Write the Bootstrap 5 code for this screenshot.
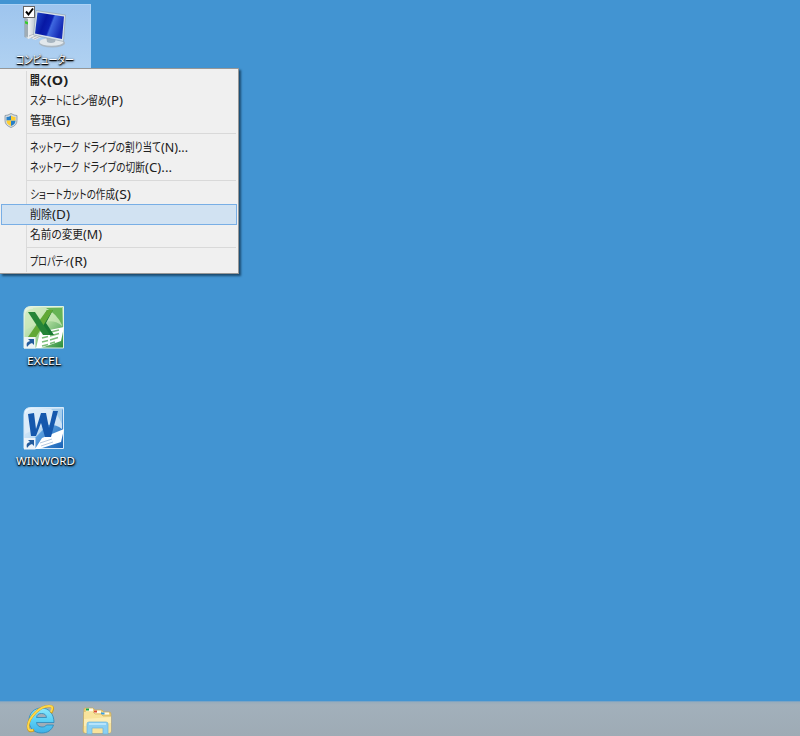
<!DOCTYPE html>
<html lang="ja">
<head>
<meta charset="utf-8">
<meta name="viewport" content="width=device-width, initial-scale=1">
<title>デスクトップ</title>
<link href="https://cdn.jsdelivr.net/npm/bootstrap@5.3.0/dist/css/bootstrap.min.css" rel="stylesheet">
<style>
body{background:#4294d2;font-family:"Noto Sans","Noto Sans CJK JP",sans-serif;font-size:12px;line-height:20px}
.desktop{height:736px}
.shortcut{width:91px;height:64px}
.pc{margin-top:4px;background:linear-gradient(#9ec5ee,#b0d1f1);border:1px solid #abd2f5;border-left:0}
.excel{margin-top:236px}
.word{margin-top:36px}
.caption{height:16px;line-height:16px;padding-top:1px;color:#fff;font-size:11.5px;text-shadow:0 1px 1px #000,1px 1px 2px #000,0 1px 3px #000a}
.context{left:0;top:68px;width:239px;height:206px;background:linear-gradient(#dadada,#dadada) 26px 2px/1px 201px no-repeat #f0f0f0;border:solid #979797;border-width:1px 1px 1px 0;box-shadow:2px 2px 2px #123c5bd0;padding:1px 1px 1px 1px;color:#202020}
.entry{height:20px;padding:1px 0 0 29px}
.entry.chosen{background:#d1e2f2;outline:1px solid #78aee5;outline-offset:-1px;height:21px;margin-bottom:-1px}
.rule{height:7px;margin:0 1px 0 26px;background:linear-gradient(#d9d9d9,#d9d9d9) 0 3px/100% 1px no-repeat}
.shield{left:3px;top:3px}
.fit{display:inline-block;transform-origin:0 50%;font-feature-settings:"palt"}
.fitbox{display:inline-block;height:20px}
.caption .fitbox{height:16px}
.tasks{height:35px;background:linear-gradient(#98acbb,#a2b0bb 3px,#9eabb5);border-top:1px solid #7ca4c4}
.ie{margin-left:25px}
.folder{margin-left:25px}
svg{display:block;flex:none}
</style>
<script src="https://cdn.jsdelivr.net/npm/bootstrap@5.3.0/dist/js/bootstrap.bundle.min.js"></script>
</head>
<body class="m-0 overflow-hidden">
<div class="desktop position-relative d-flex flex-column">
<main class="flex-grow-1">
 <div class="shortcut pc position-relative">
  <svg width="90" height="46" viewBox="0 5 90 46">
   <defs>
    <linearGradient id="scr" x1="0" x2="1" y1="0" y2=".35"><stop stop-color="#2450d0"/><stop offset=".4" stop-color="#0718a4"/><stop offset=".6" stop-color="#0c22b2"/><stop offset=".66" stop-color="#3f68e0"/><stop offset="1" stop-color="#152bb6"/></linearGradient>
    <linearGradient id="metal"><stop stop-color="#8d9aa3"/><stop offset=".35" stop-color="#eef2f4"/><stop offset="1" stop-color="#b3bfc8"/></linearGradient>
   </defs>
   <path d="M24.500 17l4-3 8 1v20l-8 4-4-2z" fill="url(#metal)"/><path d="M25 18l3 1v18l-3-1z" fill="#a0adb5"/><path d="M25 21l3 1v2.500l-3-1z" fill="#36cc2c"/>
   <path d="M28 36l8-4 7 4-8 4z" fill="#e8ebed"/><path d="M29 36l7-3M31 38l7-3M34 39l7-3" stroke="#b6bdc2"/>
   <ellipse cx="52" cy="43" rx="13" ry="4.500" fill="#aab7c2"/><ellipse cx="51.500" cy="42" rx="12" ry="3.800" fill="#e2e8ec"/>
   <path d="M46 35l10 3-1 4q-4 2-8 0z" fill="#a7b5c0"/>
   <path d="M36 10.500l29.500 4.500-2 26.500-30-6.500z" fill="#d7e2e9" stroke="#8d9fad" stroke-width=".6"/><path d="M37.500 12.500l26.500 4-2 22.500-27-5.500z" fill="url(#scr)"/>
   <rect x="23.500" y="6.500" width="11" height="11" fill="#fff" stroke="#666"/><path d="M26 11.500l2.500 3 4.500-6" fill="none" stroke="#000" stroke-width="2"/>
  </svg>
  <div class="caption ps-3"><span class="fitbox"><span class="fit" data-width="58">コンピューター</span></span></div>
 </div>
 <div class="shortcut excel">
  <svg width="91" height="48" viewBox="0 304 91 48">
   <defs><linearGradient id="green" x2="1" y2="1"><stop stop-color="#eef7e8"/><stop offset=".5" stop-color="#a9d89a"/><stop offset="1" stop-color="#278c38"/></linearGradient></defs>
   <path d="M31 306.500h32.500v41.500h-39.500v-34.500q0-7 7-7z" fill="url(#green)" stroke="#e2f3df"/>
   <path d="M33 308h29v18c-8-7-16-5-27-1l-10 5v-14q0-7 8-7z" fill="#cae8b7" opacity=".75"/><path d="M46 308h16v17q-5-11-16-17z" fill="#67b455"/>
   <path d="M40 332l24-5-3 14-20 7h-5z" fill="#fff"/>
   <path d="M43 334l6-1.500m2-.5l8-2M42 338l6-1.500m2-.5l9-2.500M42 342l6-1.500m2-.5l8-2.500M42 346l6-1.500m2-1l5-1.500" stroke="#7abd78" stroke-width="1.400"/>
   <path d="M42 319l5-9h6l-7 13 8 12h-8l-4-7z" fill="#187832"/><path d="M47 310h6l-17 27h-8l11-16z" fill="#61a836"/><path d="M28 312h7l15 23h-7z" fill="#258537"/>
   <path d="M24 337h11.500v11.500h-11.500z" fill="#edf4f6"/><path d="M27 347c-1-4 0-5 3-6l-2-2h6v6l-2-2c-3 1-3 2-5 4z" fill="#235b9c"/>
  </svg>
  <div class="caption" style="padding-left:27px"><span class="fitbox"><span class="fit" data-width="34">EXCEL</span></span></div>
 </div>
 <div class="shortcut word">
  <svg width="91" height="48" viewBox="0 404 91 48">
   <defs><linearGradient id="blue" x2="1" y2="1"><stop stop-color="#f2faff"/><stop offset=".5" stop-color="#bad9f2"/><stop offset=".52" stop-color="#5b9fdf"/><stop offset="1" stop-color="#1761b5"/></linearGradient></defs>
   <path d="M31 407.500h32.500v41h-39.500v-34q0-7 7-7z" fill="url(#blue)" stroke="#d7eafa"/>
   <path d="M33 409h29v20c-8-6-16-5-27 0l-10 5v-17q0-8 8-8z" fill="#dbebf8" opacity=".9"/><path d="M51 409h11v15q-4-10-11-15z" fill="#a5cdec"/>
   <path d="M42 438l22-9-3 13-22 7h-4z" fill="#fff"/><path d="M40 443l12-4M41 446l12-4" stroke="#b6cae1" stroke-width="1"/>
   <path d="M28 414l6-1 2 16 5-16h5l3 15 4-17h5l-7 26h-6l-4-14-5 13h-5z" fill="#1658ad"/>
   <path d="M24 438h11.500v11.500h-11.500z" fill="#edf4fa"/><path d="M27 448c-1-4 0-5 3-6l-2-2h6v6l-2-2c-3 1-3 2-5 4z" fill="#235b9c"/>
  </svg>
  <div class="caption ps-3"><span class="fitbox"><span class="fit" data-width="59">WINWORD</span></span></div>
 </div>
</main>
<footer class="tasks d-flex align-items-start">
 <svg class="ie" width="32" height="34" viewBox="25 702 32 34">
  <defs><linearGradient id="aqua" x2="0" y2="1"><stop stop-color="#8ee8fc"/><stop offset=".5" stop-color="#5ad0f5"/><stop offset="1" stop-color="#3eb0e8"/></linearGradient></defs>
  <path fill-rule="evenodd" d="M29 720.500c0-7 5-12.500 12.500-12.500s12.500 6 12.500 14.500h-17.500c.5 3 2.500 4.500 5.500 4.500 2 0 3.500-.5 4.500-2h7c-2 5.500-6 8-12 8-8 0-12.500-5.500-12.500-12.500zm7.500-3h10c-.5-3-2-4-5-4s-4.500 1-5 4z" fill="url(#aqua)" stroke="#2c86b8" stroke-width=".8"/>
  <path d="M51 713c3-5 2-7-2-7-9 0-20 11-21 20 0 5 2 6 6 4" fill="none" stroke="#c99a20" stroke-width="2.600"/><path d="M51 712c2-4 2-6-2-6-9 0-20 11-21 20 0 4 2 5 5 4" fill="none" stroke="#ffd84a" stroke-width="1.900"/>
 </svg>
 <svg class="folder" width="32" height="34" viewBox="82 702 32 34">
  <path d="M84 709q0-1 1-1h8l2 2h7l2 2h5q2 0 2 2v17q0 2-2 2h-24q-2 0-2-2z" fill="#ebce75" stroke="#c9a95c" stroke-width=".7"/>
  <path d="M86 708.500h7v3h-7zM94 710.500h7v3h-7zM102 712.500h7v2h-7z" fill="#fffce9"/><path d="M86 708.500h3v2h-3z" fill="#15a748"/><path d="M94 710.500h3v2h-3z" fill="#d84a32"/><path d="M101 712.500h3.500v2h-3.500z" fill="#399de1"/>
  <path d="M84 712h9l2 2h6l2 2h8v15q0 2-2 2h-23q-2 0-2-2z" fill="#f8e39b"/><path d="M93 712l2 2h6l2 2h8" fill="none" stroke="#d6b968" stroke-width=".8"/><path d="M84 719l27-2v6l-27 3z" fill="#fff4c6" opacity=".6"/>
  <path d="M87 734v-10q0-2 2-2h17q2 0 2 2v10h-5v-6h-11v6z" fill="#8bcff2" stroke="#6db3da" stroke-width=".7"/><path d="M89 724h17" stroke="#c5ebff" stroke-width="1.500"/>
 </svg>
</footer>
<nav class="context position-absolute" aria-label="コンピューター">
 <div class="entry fw-bold"><span class="fitbox"><span class="fit" data-width="17">開く</span></span><span class="fitbox"><span class="fit" data-width="21">(O)</span></span></div>
 <div class="entry"><span class="fitbox"><span class="fit" data-width="77">スタートにピン留め</span></span><span class="fitbox"><span class="fit" data-width="16">(P)</span></span></div>
 <div class="entry position-relative"><svg class="shield position-absolute" width="14" height="15" viewBox="0 0 14 15"><path d="M7 .5q3 2 6 2v5q0 5-6 7-6-2-6-7v-5q3 0 6-2z" fill="#d5dce1" stroke="#84939e" stroke-width=".8"/><path d="M7 2.500v5h-4.500v-3.500q2.500 0 4.500-1.500zM7 7.500h4.500q0 4-4.500 5.500z" fill="#277fc8"/><path d="M7 2.500q2 1.500 4.500 1.500v3.500h-4.500zM2.500 7.500h4.500v5.500q-4.500-1.500-4.500-5.500z" fill="#ffce2e"/></svg><span class="fitbox"><span class="fit" data-width="22">管理</span></span><span class="fitbox"><span class="fit" data-width="18">(G)</span></span></div>
 <div class="rule"></div>
 <div class="entry"><span class="fitbox"><span class="fit" data-width="49">ネットワーク</span></span><span class="fitbox"><span class="fit ms-1" data-width="78">ドライブの割り当て</span></span><span class="fitbox ms-1"><span class="fit" data-width="27">(N)...</span></span></div>
 <div class="entry"><span class="fitbox"><span class="fit" data-width="49">ネットワーク</span></span><span class="fitbox"><span class="fit ms-1" data-width="62">ドライブの切断</span></span><span class="fitbox ms-1"><span class="fit" data-width="27">(C)...</span></span></div>
 <div class="rule"></div>
 <div class="entry"><span class="fitbox"><span class="fit" data-width="85">ショートカットの作成</span></span><span class="fitbox"><span class="fit" data-width="16">(S)</span></span></div>
 <div class="entry chosen"><span class="fitbox"><span class="fit" data-width="22">削除</span></span><span class="fitbox"><span class="fit" data-width="18">(D)</span></span></div>
 <div class="entry"><span class="fitbox"><span class="fit" data-width="53">名前の変更</span></span><span class="fitbox"><span class="fit" data-width="19">(M)</span></span></div>
 <div class="rule"></div>
 <div class="entry"><span class="fitbox"><span class="fit" data-width="40">プロパティ</span></span><span class="fitbox"><span class="fit" data-width="17">(R)</span></span></div>
</nav>
</div>
<script>
// Condense each label run to its UI width.
document.querySelectorAll('.context > div, .caption').forEach(e => e.classList.add('d-flex', 'text-nowrap'));
document.querySelectorAll('.fit').forEach(e => {
  const w = +e.dataset.width, natural = e.getBoundingClientRect().width;
  e.parentElement.style.width = w + 'px';
  e.style.transform = `scaleX(${w / natural})`;
});
</script>
</body>
</html>
